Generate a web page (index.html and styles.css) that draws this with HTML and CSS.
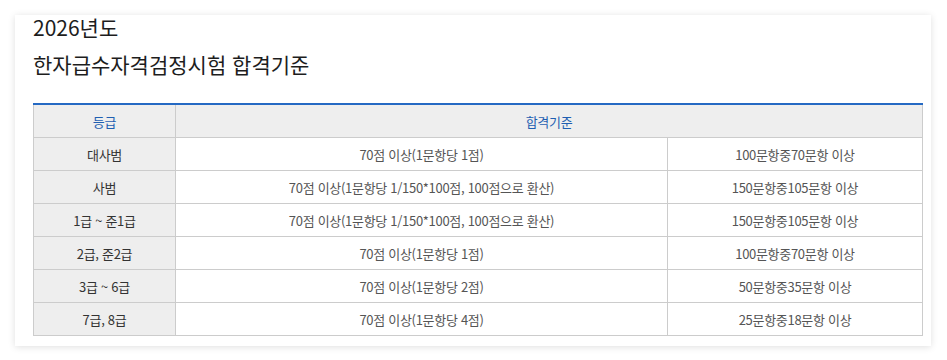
FILE: index.html
```html
<!DOCTYPE html>
<html lang="ko">
<head>
<meta charset="utf-8">
<title>합격기준</title>
<link rel="stylesheet" href="styles.css">
</head>
<body>
<div class="card">
  <h2 class="title">
    <span class="title-year">2026년도</span>
    <span class="title-main">한자급수자격검정시험 합격기준</span>
  </h2>
  <table class="criteria">
    <colgroup>
      <col class="col-grade">
      <col class="col-score">
      <col class="col-count">
    </colgroup>
    <thead>
      <tr>
        <th>등급</th>
        <th colspan="2">합격기준</th>
      </tr>
    </thead>
    <tbody>
      <tr><th>대사범</th><td>70점 이상(1문항당 1점)</td><td>100문항중70문항 이상</td></tr>
      <tr><th>사범</th><td>70점 이상(1문항당 1/150*100점, 100점으로 환산)</td><td>150문항중105문항 이상</td></tr>
      <tr><th>1급 ~ 준1급</th><td>70점 이상(1문항당 1/150*100점, 100점으로 환산)</td><td>150문항중105문항 이상</td></tr>
      <tr><th>2급, 준2급</th><td>70점 이상(1문항당 1점)</td><td>100문항중70문항 이상</td></tr>
      <tr><th>3급 ~ 6급</th><td>70점 이상(1문항당 2점)</td><td>50문항중35문항 이상</td></tr>
      <tr><th>7급, 8급</th><td>70점 이상(1문항당 4점)</td><td>25문항중18문항 이상</td></tr>
    </tbody>
  </table>
</div>
</body>
</html>
```

FILE: styles.css
```css
html, body {
  margin: 0;
  padding: 0;
  background: #ffffff;
}
body {
  padding: 15px 16px 15px 15px;
  font-family: "Noto Sans CJK KR", "Noto Sans", sans-serif;
  color: #333;
}
.card {
  background: #fff;
  box-shadow: 0 1px 7px rgba(0, 0, 0, 0.13);
  padding: 0 8px 10px 18px;
}
.title {
  margin: 0;
  font-weight: 400;
  font-size: 21px;
  letter-spacing: 0;
  color: #1d1d1d;
}
.title-year,
.title-main {
  display: block;
  line-height: 24px;
}
.title-main {
  margin-top: 13px;
}
.criteria {
  margin-top: 27px;
  width: 100%;
  border-collapse: collapse;
  border-top: 2px solid #2569c3;
  font-size: 13px;
  letter-spacing: -0.3px;
  table-layout: fixed;
}
.col-grade { width: 142px; }
.col-score { width: 492px; }
.criteria th,
.criteria td {
  border: 1px solid #cccccc;
  height: 32px;
  padding: 0;
  text-align: center;
  vertical-align: middle;
  font-weight: 400;
}
.criteria thead th {
  background: #eeeeee;
  color: #1f5fb2;
  border-top: none;
}
.criteria tbody th {
  background: #eeeeee;
  color: #333;
}
.criteria td {
  color: #555;
}
```
